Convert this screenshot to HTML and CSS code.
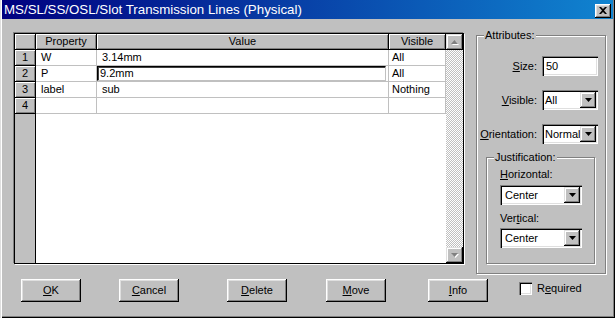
FILE: index.html
```html
<!DOCTYPE html>
<html>
<head>
<meta charset="utf-8">
<title>MS/SL/SS/OSL/Slot Transmission Lines (Physical)</title>
<link rel="stylesheet" href="styles.css">
</head>
<body>
<div class="window">
  <div class="titlebar">
    <span class="title">MS/SL/SS/OSL/Slot Transmission Lines (Physical)</span>
    <div class="close">
      <svg width="8" height="7" viewBox="0 0 8 7"><path d="M0 0h2l2 2 2-2h2L5 3.5 8 7H6L4 5 2 7H0l3-3.5z" fill="#000"/></svg>
    </div>
  </div>
  <div class="content">
    <div class="main">
      <div class="grid">
        <div class="table">
          <div class="row head">
            <div class="c rh"></div>
            <div class="c">Property</div>
            <div class="c">Value</div>
            <div class="c">Visible</div>
          </div>
          <div class="row">
            <div class="c rh">1</div>
            <div class="c prop">W</div>
            <div class="c val">3.14mm</div>
            <div class="c vis">All</div>
          </div>
          <div class="row">
            <div class="c rh">2</div>
            <div class="c prop">P</div>
            <div class="c val editing"><span class="edit">9.2mm</span></div>
            <div class="c vis">All</div>
          </div>
          <div class="row">
            <div class="c rh">3</div>
            <div class="c prop">label</div>
            <div class="c val">sub</div>
            <div class="c vis">Nothing</div>
          </div>
          <div class="row">
            <div class="c rh">4</div>
            <div class="c prop"></div>
            <div class="c val"></div>
            <div class="c vis"></div>
          </div>
          <div class="filler"><div class="fill-rh"></div><div class="fill-rest"></div></div>
        </div>
        <div class="vscroll">
          <div class="sbtn">
            <svg width="8" height="5" viewBox="0 0 8 5"><path d="M4.5 1L8 5H1z" fill="#fff"/><path d="M3.5 0L7 4H0z" fill="#808080"/></svg>
          </div>
          <div class="track"></div>
          <div class="sbtn">
            <svg width="8" height="5" viewBox="0 0 8 5"><path d="M1 1h7L4.5 5z" fill="#fff"/><path d="M0 0h7L3.5 4z" fill="#808080"/></svg>
          </div>
        </div>
      </div>

      <fieldset class="group attrs">
        <legend>Attributes:</legend>
        <div class="form">
          <label><u>S</u>ize:</label>
          <div class="field">50</div>
          <label><u>V</u>isible:</label>
          <div class="combo"><span>All</span><div class="drop"><svg width="7" height="4" viewBox="0 0 7 4"><path d="M0 0h7L3.5 4z" fill="#000"/></svg></div></div>
          <label><u>O</u>rientation:</label>
          <div class="combo"><span>Normal</span><div class="drop"><svg width="7" height="4" viewBox="0 0 7 4"><path d="M0 0h7L3.5 4z" fill="#000"/></svg></div></div>
        </div>
        <fieldset class="group just">
          <legend>Justification:</legend>
          <div class="just-body">
            <label class="lbl-h"><u>H</u>orizontal:</label>
            <div class="combo wide c-h"><span>Center</span><div class="drop"><svg width="7" height="4" viewBox="0 0 7 4"><path d="M0 0h7L3.5 4z" fill="#000"/></svg></div></div>
            <label class="lbl-v">Ver<u>t</u>ical:</label>
            <div class="combo wide"><span>Center</span><div class="drop"><svg width="7" height="4" viewBox="0 0 7 4"><path d="M0 0h7L3.5 4z" fill="#000"/></svg></div></div>
          </div>
        </fieldset>
      </fieldset>
    </div>

    <div class="buttons">
      <div class="btn"><u>O</u>K</div>
      <div class="btn"><u>C</u>ancel</div>
      <div class="btn"><u>D</u>elete</div>
      <div class="btn"><u>M</u>ove</div>
      <div class="btn"><u>I</u>nfo</div>
      <div class="req"><span class="check"></span><span>R<u>e</u>quired</span></div>
    </div>
  </div>
</div>
</body>
</html>
```

FILE: styles.css
```css
* { box-sizing: border-box; }
html, body { margin: 0; padding: 0; }
body {
  width: 615px;
  height: 318px;
  overflow: hidden;
  background: #c0c0c0;
  font: 11px/13px "Liberation Sans", Arial, sans-serif;
  color: #000;
}
u { text-decoration-thickness: 1px; text-underline-offset: 1px; }

.window {
  width: 615px;
  height: 318px;
  background: #c0c0c0;
  padding: 0 2px 2px 2px;
  box-shadow: inset 1px 0 #dfdfdf, inset 2px 0 #fff, inset -1px -1px #000, inset -2px -2px #808080;
  display: flex;
  flex-direction: column;
}

.titlebar {
  height: 19px;
  display: flex;
  align-items: flex-start;
  background: linear-gradient(to right, #000080, #1084d0);
}
.title {
  flex: 1;
  color: #fff;
  font-size: 13.3px;
  line-height: 19px;
  padding-left: 2px;
  white-space: nowrap;
}
.close {
  width: 16px;
  height: 14px;
  margin: 4px 2px 0 0;
  background: #c0c0c0;
  box-shadow: inset -1px -1px #000, inset 1px 1px #fff, inset -2px -2px #808080, inset 2px 2px #dfdfdf;
  display: flex;
  align-items: center;
  justify-content: center;
}
.close svg { margin-left: -1px; margin-top: -1px; }

.main { display: flex; align-items: flex-start; }

.grid {
  width: 450px;
  height: 231px;
  margin: 14px 0 0 12px;
  border: 1px solid #000;
  box-shadow: -1px -1px #808080, 1px 1px #fff;
  display: flex;
  background: #fff;
}
.table { width: 431px; display: flex; flex-direction: column; }
.row {
  display: grid;
  grid-template-columns: 21px 61px 292px 57px;
  height: 16px;
}
.c {
  border-right: 1px solid #c0c0c0;
  border-bottom: 1px solid #c0c0c0;
  padding-left: 5px;
  line-height: 15px;
  white-space: nowrap;
  overflow: hidden;
}
.c.vis { padding-left: 3px; }
.head .c, .c.rh {
  background: #c0c0c0;
  border-color: #000;
  box-shadow: inset 1px 1px #fff, inset -1px -1px #808080;
  text-align: center;
  padding: 0;
}
.c.editing { padding: 0; }
.edit {
  display: block;
  height: 15px;
  width: calc(100% - 2px);
  border: 1px solid;
  border-color: #000 #c0c0c0 #c0c0c0 #000;
  box-shadow: inset 1px 1px #404040;
  padding-left: 2px;
  line-height: 13px;
}
.filler { flex: 1; display: flex; }
.fill-rh { width: 21px; background: #c0c0c0; border-right: 1px solid #000; }
.fill-rest { flex: 1; background: #fff; }

.vscroll {
  width: 17px;
  display: flex;
  flex-direction: column;
  background: repeating-conic-gradient(#c0c0c0 0 25%, #fff 0 50%) 0 0 / 2px 2px;
}
.sbtn {
  height: 16px;
  background: #c0c0c0;
  box-shadow: inset -1px -1px #000, inset 1px 1px #dfdfdf, inset -2px -2px #808080, inset 2px 2px #fff;
  display: flex;
  align-items: center;
  justify-content: center;
}
.track { flex: 1; }

.group {
  margin: 0;
  border: 1px solid #808080;
  box-shadow: inset 1px 1px #fff, 1px 1px #fff;
  min-inline-size: 0;
}
.group legend {
  padding: 0 1px;
  margin-left: 7px;
  line-height: 13px;
  background: #c0c0c0;
}
.attrs {
  width: 130px;
  margin: 10px 0 0 12px;
  padding: 14px 6px 9px 0;
}
.form {
  display: grid;
  grid-template-columns: 60px 56px;
  column-gap: 5px;
  row-gap: 14px;
  align-items: center;
}
.form label { justify-self: end; }

.field, .combo {
  height: 20px;
  background: #fff;
  box-shadow: inset 1px 1px #808080, inset 2px 2px #000, inset -1px -1px #fff, inset -2px -2px #dfdfdf;
  padding: 2px;
}
.field { padding-left: 4px; line-height: 16px; }
.combo { display: flex; }
.combo span {
  flex: 1;
  padding-left: 1px;
  line-height: 16px;
  white-space: nowrap;
  overflow: hidden;
}
.combo.wide span { padding-left: 3px; }
.drop {
  width: 16px;
  height: 16px;
  flex: none;
  background: #c0c0c0;
  box-shadow: inset -1px -1px #000, inset 1px 1px #dfdfdf, inset -2px -2px #808080, inset 2px 2px #fff;
  display: flex;
  align-items: center;
  justify-content: center;
}

.just {
  margin: 7px 4px 0 9px;
  padding: 4px 0 15px 0;
}
.just-body { padding-left: 13px; }
.just-body label { display: block; }
.lbl-h { margin-bottom: 4px; }
.lbl-v { margin-bottom: 3px; }
.combo.wide { width: 82px; }
.c-h { margin-bottom: 7px; }

.buttons {
  display: grid;
  grid-template-columns: 98px 108px 99px 102px 91px auto;
  align-items: start;
  margin: 5px 0 0 19px;
}
.btn {
  width: 60px;
  height: 23px;
  background: #c0c0c0;
  box-shadow: inset -1px -1px #000, inset 1px 1px #fff, inset -2px -2px #808080, inset 2px 2px #dfdfdf;
  text-align: center;
  line-height: 23px;
}
.req {
  display: flex;
  align-items: center;
  gap: 5px;
  margin-top: 3px;
}
.check {
  width: 13px;
  height: 13px;
  background: #fff;
  box-shadow: inset 1px 1px #808080, inset 2px 2px #000, inset -1px -1px #fff, inset -2px -2px #dfdfdf;
}
```
